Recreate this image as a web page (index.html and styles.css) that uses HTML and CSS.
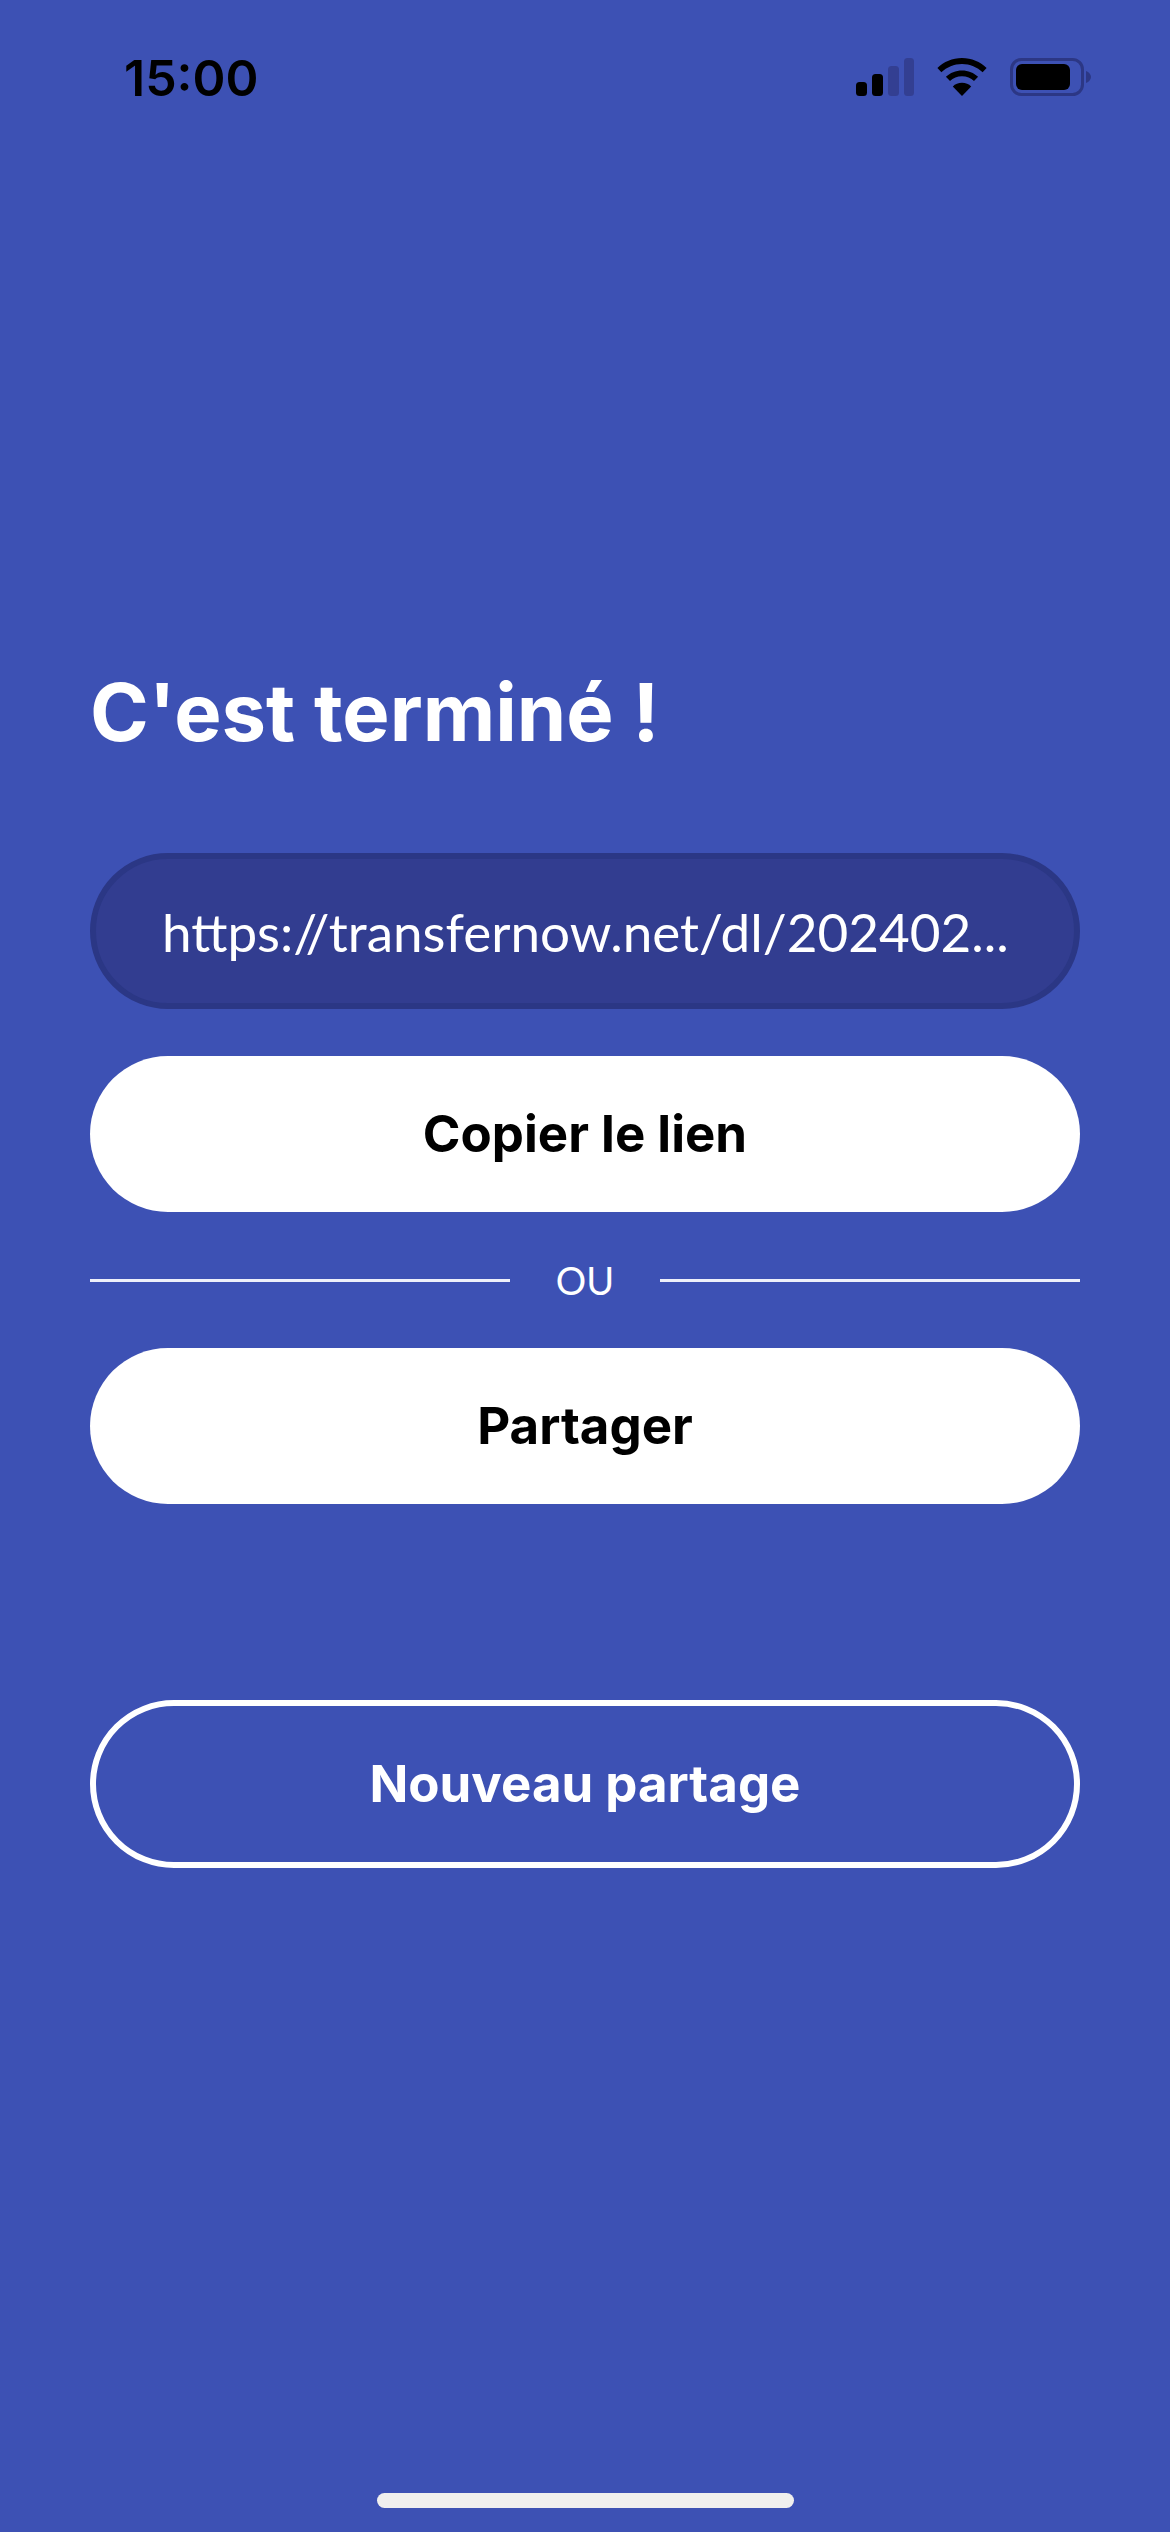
FILE: index.html
```html
<!DOCTYPE html>
<html lang="fr">
<head>
<meta charset="utf-8">
<title>Transfer</title>
<link rel="stylesheet" href="styles.css">
</head>
<body>
<div class="screen">
  <header class="status">
    <span class="time">15:00</span>
    <div class="status-icons">
      <svg class="signal" width="58" height="38" viewBox="0 0 58 38">
        <rect x="0" y="24" width="11" height="14" rx="3.5" fill="#000"/>
        <rect x="16" y="16" width="11" height="22" rx="3.5" fill="#000"/>
        <rect x="32" y="8" width="11" height="30" rx="3.5" fill="#333f92"/>
        <rect x="48" y="0" width="10" height="38" rx="3.5" fill="#333f92"/>
      </svg>
      <svg class="wifi" width="50" height="38" viewBox="0 0 50 38">
        <path d="M25 0C34.6 0 43.2 3.8 49.6 10L45.6 14.2C40.2 9 33 5.9 25 5.9S9.8 9 4.4 14.2L.4 10C6.8 3.8 15.4 0 25 0Z" fill="#000"/>
        <path d="M25 12.4C31.2 12.4 36.9 14.8 41.1 18.8L37 23C33.9 20 29.7 18.2 25 18.2S16.100 20 13 23L8.900 18.800C13.100 14.800 18.800 12.400 25 12.400Z" fill="#000"/>
        <path d="M25 24.800C28.600 24.800 31.800 26.200 34.200 28.400L25 38L15.800 28.400C18.200 26.200 21.400 24.800 25 24.800Z" fill="#000"/>
      </svg>
      <svg class="battery" width="81" height="38" viewBox="0 0 81 38">
        <rect x="1.500" y="1.500" width="71" height="35" rx="10" fill="none" stroke="#2c3785" stroke-width="3"/>
        <rect x="6" y="6" width="54" height="26" rx="6" fill="#000"/>
        <path d="M76 13C79 14 81 16.500 81 19S79 24 76 25Z" fill="#2c3785"/>
      </svg>
    </div>
  </header>
  <main class="content">
    <h1 class="title">C'est terminé !</h1>
    <div class="link-field"><span class="link-text">https://transfernow.net/dl/202402...</span></div>
    <button class="btn btn-white btn-copy">Copier le lien</button>
    <div class="divider"><span class="rule"></span><span class="or">OU</span><span class="rule"></span></div>
    <button class="btn btn-white">Partager</button>
    <button class="btn btn-outline">Nouveau partage</button>
  </main>
  <div class="home-bar"></div>
</div>
</body>
</html>
```

FILE: styles.css
```css
* { box-sizing: border-box; }
html, body { margin: 0; padding: 0; }
body { background: #3d51b4; font-family: "Inter", "Liberation Sans", sans-serif; }
.screen { width: 1170px; height: 2532px; display: flex; flex-direction: column; background: #3d51b4; }
.status { height: 154px; padding: 40px 79px 0 124px; display: flex; justify-content: space-between; align-items: flex-start; flex: none; }
.time { font-size: 50px; line-height: 76px; font-weight: 600; color: #000; }
.status-icons { display: flex; align-items: center; gap: 23px; padding-top: 18px; }
.content { flex: 1; padding: 0 90px; display: flex; flex-direction: column; }
.title { margin: 510px 0 0; height: 97px; font-size: 79.5px; line-height: 97px; font-weight: 700; color: #fff; }
.link-field { margin-top: 92px; height: 156px; border: 6px solid #2b3785; border-radius: 78px; background: #323d90; display: flex; align-items: center; padding: 0 66px; }
.link-text { font-family: "Lato", sans-serif; font-size: 53px; color: #fff; white-space: nowrap; }
.btn { display: block; width: 100%; border-radius: 78px; font-family: inherit; font-weight: 700; font-size: 51px; line-height: 60px; padding: 0; }
.btn-white { height: 156px; border: 0; background: #fff; color: #000; }
.btn-copy { margin-top: 47px; }
.divider { height: 136px; display: flex; align-items: center; }
.rule { flex: 1; height: 3px; background: #eef0fa; }
.or { width: 150px; text-align: center; font-family: "Lato", sans-serif; font-size: 38px; color: #fff; }
.btn-outline { margin-top: 196px; height: 168px; border: 6px solid #fff; border-radius: 84px; background: transparent; color: #fff; }
.home-bar { flex: none; align-self: center; width: 417px; height: 15px; margin-bottom: 24px; border-radius: 8px; background: #f0efee; }
```
